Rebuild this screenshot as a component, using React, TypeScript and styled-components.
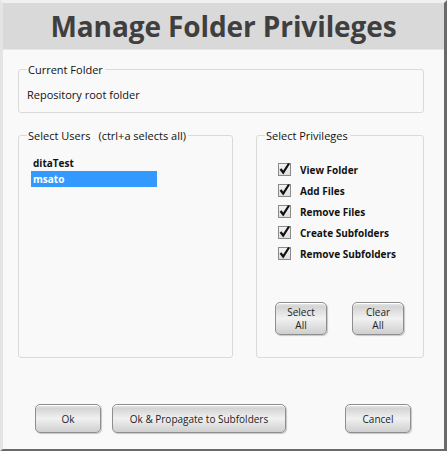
import React, { useState } from 'react';
import styled, { createGlobalStyle } from 'styled-components';

const GlobalStyle = createGlobalStyle`
  html, body {
    margin: 0;
    padding: 0;
    background: #ffffff;
  }
  * {
    box-sizing: border-box;
  }
`;

const Window = styled.div`
  width: 447px;
  height: 451px;
  background: #f9f9f9;
  border-left: 3px solid #e4e4e4;
  border-top: 3px solid #f0f0f0;
  border-right: 3px solid #6a6a6a;
  border-bottom: 2px solid #6a6a6a;
  display: flex;
  flex-direction: column;
  font-family: 'Open Sans', 'Noto Sans', sans-serif;
  color: #111;
`;

const TitleBar = styled.div`
  height: 47px;
  background: #d9d9d9;
  display: flex;
  align-items: center;
  justify-content: center;
  border-bottom: 1px solid #e8e8e8;
`;

const Title = styled.h1`
  margin: 0;
  font-size: 28px;
  font-weight: 700;
  color: #3f3f3f;
  letter-spacing: -0.1px;
`;

const Body = styled.div`
  flex: 1;
  padding: 12px 20px 0 15px;
  display: flex;
  flex-direction: column;
`;

const Group = styled.fieldset<{ $w?: number; $h?: number }>`
  margin: 0;
  padding: 4px 8px 6px 8px;
  border: 1px solid #dadada;
  border-radius: 3px;
  width: ${p => (p.$w ? `${p.$w}px` : 'auto')};
  height: ${p => (p.$h ? `${p.$h}px` : 'auto')};
  min-width: 0;
`;

const Legend = styled.legend`
  padding: 0 2px 0 1px;
  font-size: 11px;
  color: #111;
`;

const FolderText = styled.div`
  font-size: 11px;
  padding: 6px 0 4px 0;
`;

const Columns = styled.div`
  display: flex;
  justify-content: space-between;
  margin-top: 15px;
`;

const Hint = styled.span`
  margin-left: 8px;
`;

const UserList = styled.ul`
  list-style: none;
  margin: 8px 0 0 4px;
  padding: 0;
  width: 126px;
`;

const UserItem = styled.li<{ $selected?: boolean }>`
  height: 16px;
  line-height: 16px;
  padding-left: 2px;
  font-size: 10px;
  font-weight: 700;
  color: ${p => (p.$selected ? '#ffffff' : '#111')};
  background: ${p => (p.$selected ? '#3399ff' : 'transparent')};
`;

const PrivList = styled.div`
  display: flex;
  flex-direction: column;
  gap: 4px;
  margin: 14px 0 0 13px;
`;

const PrivRow = styled.label`
  display: flex;
  align-items: center;
  gap: 9px;
  height: 17px;
  font-size: 10px;
  font-weight: 700;
`;

const Box = styled.span`
  width: 13px;
  height: 13px;
  border: 1px solid #8a8a8a;
  background: linear-gradient(#f4f4f4, #dedede);
  position: relative;
  display: inline-block;
`;

const PrivButtons = styled.div`
  display: flex;
  justify-content: space-between;
  margin: 40px 11px 0 10px;
`;

const Button = styled.button<{ $w: number; $h: number }>`
  width: ${p => p.$w}px;
  height: ${p => p.$h}px;
  padding: 0;
  display: flex;
  flex-direction: column;
  align-items: center;
  justify-content: center;
  font-family: inherit;
  font-size: 10px;
  line-height: 14px;
  color: #222;
  border: 1px solid #8e8e8e;
  border-radius: 5px;
  background: linear-gradient(#e9e9e9 0%, #d4d4d4 12%, #f1f1f1 50%, #cfcfcf 100%);
  box-shadow: inset 0 1px 0 #ffffff, 1px 1px 1px rgba(0, 0, 0, 0.2);
  cursor: pointer;
`;

const Line = styled.span`
  display: block;
  height: 13px;
  line-height: 13px;
`;

const Footer = styled.div`
  display: flex;
  align-items: center;
  padding: 46px 0 0 17px;
`;

const Check: React.FC = () => (
  <Box>
    <svg width="13" height="13" viewBox="0 0 13 13" style={{ position: 'absolute', left: -1, top: -2 }}>
      <path d="M2.5 7 L5.2 10.5 L11 1.5" fill="none" stroke="#111" strokeWidth="2.2" strokeLinejoin="miter" />
    </svg>
  </Box>
);

const privileges = ['View Folder', 'Add Files', 'Remove Files', 'Create Subfolders', 'Remove Subfolders'];

const App: React.FC = () => {
  const [selected, setSelected] = useState('msato');
  const users = ['ditaTest', 'msato'];

  return (
    <>
      <GlobalStyle />
      <Window>
        <TitleBar>
          <Title>Manage Folder Privileges</Title>
        </TitleBar>
        <Body>
          <Group>
            <Legend>Current Folder</Legend>
            <FolderText>Repository root folder</FolderText>
          </Group>
          <Columns>
            <Group $w={215} $h={230}>
              <Legend>
                Select Users<Hint>(ctrl+a selects all)</Hint>
              </Legend>
              <UserList>
                {users.map(u => (
                  <UserItem key={u} $selected={u === selected} onClick={() => setSelected(u)}>
                    {u}
                  </UserItem>
                ))}
              </UserList>
            </Group>
            <Group $w={168} $h={230}>
              <Legend>Select Privileges</Legend>
              <PrivList>
                {privileges.map(p => (
                  <PrivRow key={p}>
                    <Check />
                    {p}
                  </PrivRow>
                ))}
              </PrivList>
              <PrivButtons>
                <Button $w={52} $h={33}><Line>Select</Line><Line>All</Line></Button>
                <Button $w={52} $h={33}><Line>Clear</Line><Line>All</Line></Button>
              </PrivButtons>
            </Group>
          </Columns>
          <Footer>
            <Button $w={66} $h={29}>Ok</Button>
            <Button $w={174} $h={29} style={{ marginLeft: 11 }}>Ok &amp; Propagate to Subfolders</Button>
            <Button $w={66} $h={29} style={{ marginLeft: 'auto', marginRight: 13 }}>Cancel</Button>
          </Footer>
        </Body>
      </Window>
    </>
  );
};

export default App;
